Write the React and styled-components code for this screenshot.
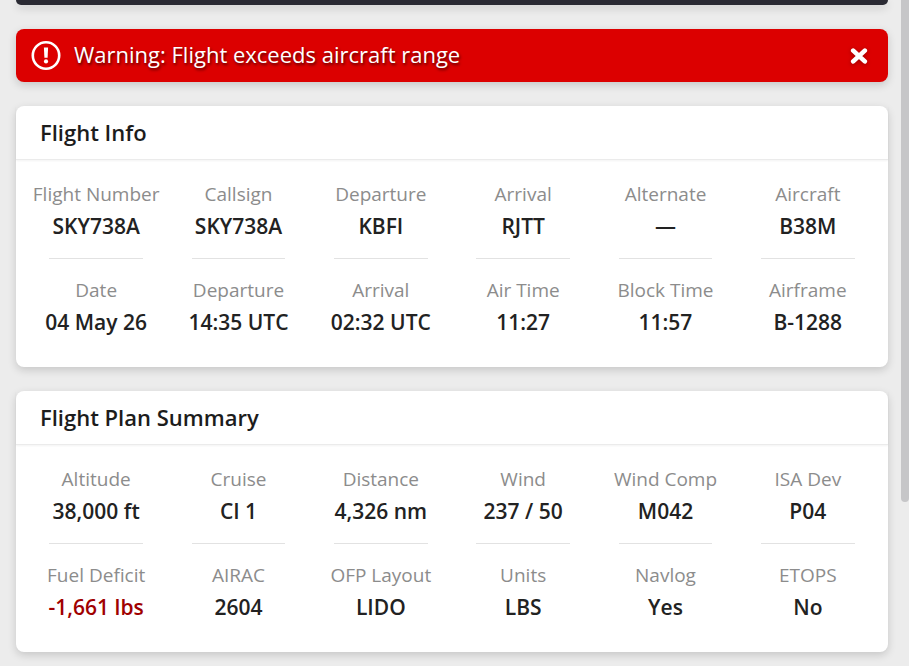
import React, { useState } from 'react';
import styled, { createGlobalStyle } from 'styled-components';

const GlobalStyle = createGlobalStyle`
  * {
    box-sizing: border-box;
  }

  body {
    margin: 0;
    background-color: #ececec;
    font-family: 'Open Sans', 'Noto Sans', sans-serif;
    color: #1c1c1c;
  }
`;

const Page = styled.main`
  display: flex;
  flex-direction: column;
  gap: 24px;
  padding: 0 21px 14px 16px;
`;

const TopPanel = styled.div`
  height: 5px;
  border-radius: 0 0 8px 8px;
  background-color: #2a2a33;
  box-shadow: 0 3px 8px rgba(0, 0, 0, 0.16);
`;

const Alert = styled.div`
  display: flex;
  align-items: center;
  gap: 13px;
  height: 53px;
  padding: 0 20px 0 15px;
  border-radius: 8px;
  background-color: #dc0000;
  box-shadow: 0 3px 8px rgba(0, 0, 0, 0.16);
  color: #fff;
`;

const AlertText = styled.span`
  flex: 1;
  padding-bottom: 3px;
  font-size: 22px;
  line-height: 32px;
  text-shadow: 1px 2px 3px rgba(0, 0, 0, 0.6);
`;

const AlertIcon = styled.svg`
  display: block;
  width: 30px;
  height: 30px;
`;

const CloseButton = styled.button`
  padding: 0;
  border: none;
  background: none;
  color: #fff;
  cursor: pointer;
`;

const CloseIcon = styled.svg`
  display: block;
  width: 18px;
  height: 18px;
  filter: drop-shadow(0 1px 2px rgba(0, 0, 0, 0.3));
`;

const Card = styled.section`
  border-radius: 8px;
  background-color: #fff;
  box-shadow: 0 3px 8px rgba(0, 0, 0, 0.16);
`;

const CardTitle = styled.h2`
  margin: 0;
  padding: 10px 24px 11px;
  border-bottom: 1px solid #ebebeb;
  box-shadow: 0 1px 2px rgba(0, 0, 0, 0.05);
  font-size: 22px;
  font-weight: 600;
  line-height: 32px;
`;

const Grid = styled.dl`
  display: grid;
  grid-template-columns: repeat(6, 1fr);
  margin: 0;
  padding: 18px 9px 29px;
`;

const Item = styled.div`
  display: flex;
  flex-direction: column;
  align-items: center;
  white-space: nowrap;

  &:nth-child(-n + 6)::after {
    content: '';
    width: 66%;
    height: 1px;
    margin: 16px 0 15px;
    background-color: #e2e2e2;
  }
`;

const Label = styled.dt`
  color: #8c8c8c;
  font-size: 19px;
  font-weight: 400;
  line-height: 32px;
`;

const Value = styled.dd`
  margin: 0;
  color: ${({ $negative }) => ($negative ? '#a00000' : '#222')};
  font-size: 21px;
  font-weight: 600;
  line-height: 32px;
`;

const ScrollThumb = styled.div`
  position: fixed;
  top: -8px;
  right: 0;
  width: 8px;
  height: 510px;
  border-radius: 4px;
  background-color: #c6c6c8;
`;

const flightInfo = [
  { label: 'Flight Number', value: 'SKY738A' },
  { label: 'Callsign', value: 'SKY738A' },
  { label: 'Departure', value: 'KBFI' },
  { label: 'Arrival', value: 'RJTT' },
  { label: 'Alternate', value: '—' },
  { label: 'Aircraft', value: 'B38M' },
  { label: 'Date', value: '04 May 26' },
  { label: 'Departure', value: '14:35 UTC' },
  { label: 'Arrival', value: '02:32 UTC' },
  { label: 'Air Time', value: '11:27' },
  { label: 'Block Time', value: '11:57' },
  { label: 'Airframe', value: 'B-1288' },
];

const planSummary = [
  { label: 'Altitude', value: '38,000 ft' },
  { label: 'Cruise', value: 'CI 1' },
  { label: 'Distance', value: '4,326 nm' },
  { label: 'Wind', value: '237 / 50' },
  { label: 'Wind Comp', value: 'M042' },
  { label: 'ISA Dev', value: 'P04' },
  { label: 'Fuel Deficit', value: '-1,661 lbs', negative: true },
  { label: 'AIRAC', value: '2604' },
  { label: 'OFP Layout', value: 'LIDO' },
  { label: 'Units', value: 'LBS' },
  { label: 'Navlog', value: 'Yes' },
  { label: 'ETOPS', value: 'No' },
];

const InfoCard = ({ title, items }) => (
  <Card>
    <CardTitle>{title}</CardTitle>
    <Grid>
      {items.map((item, index) => (
        <Item key={index}>
          <Label>{item.label}</Label>
          <Value $negative={item.negative}>{item.value}</Value>
        </Item>
      ))}
    </Grid>
  </Card>
);

const App = () => {
  const [showWarning, setShowWarning] = useState(true);

  return (
    <>
      <GlobalStyle />
      <Page>
        <TopPanel />
        {showWarning && (
          <Alert role="alert">
            <AlertIcon viewBox="0 0 30 30" aria-hidden="true">
              <circle cx="15" cy="14.5" r="13.2" fill="none" stroke="currentColor" strokeWidth="2.6" />
              <path d="M12.9 6.4h4.2l-.5 10.4h-3.2z" fill="currentColor" />
              <circle cx="15" cy="20.4" r="2.1" fill="currentColor" />
            </AlertIcon>
            <AlertText>Warning: Flight exceeds aircraft range</AlertText>
            <CloseButton type="button" aria-label="Close" onClick={() => setShowWarning(false)}>
              <CloseIcon viewBox="0 0 18 18" aria-hidden="true">
                <path d="M3.2 3.6l11.6 10.8M14.8 3.6L3.2 14.4" stroke="currentColor" strokeWidth="4.6" strokeLinecap="round" />
              </CloseIcon>
            </CloseButton>
          </Alert>
        )}
        <InfoCard title="Flight Info" items={flightInfo} />
        <InfoCard title="Flight Plan Summary" items={planSummary} />
      </Page>
      <ScrollThumb />
    </>
  );
};

export default App;
